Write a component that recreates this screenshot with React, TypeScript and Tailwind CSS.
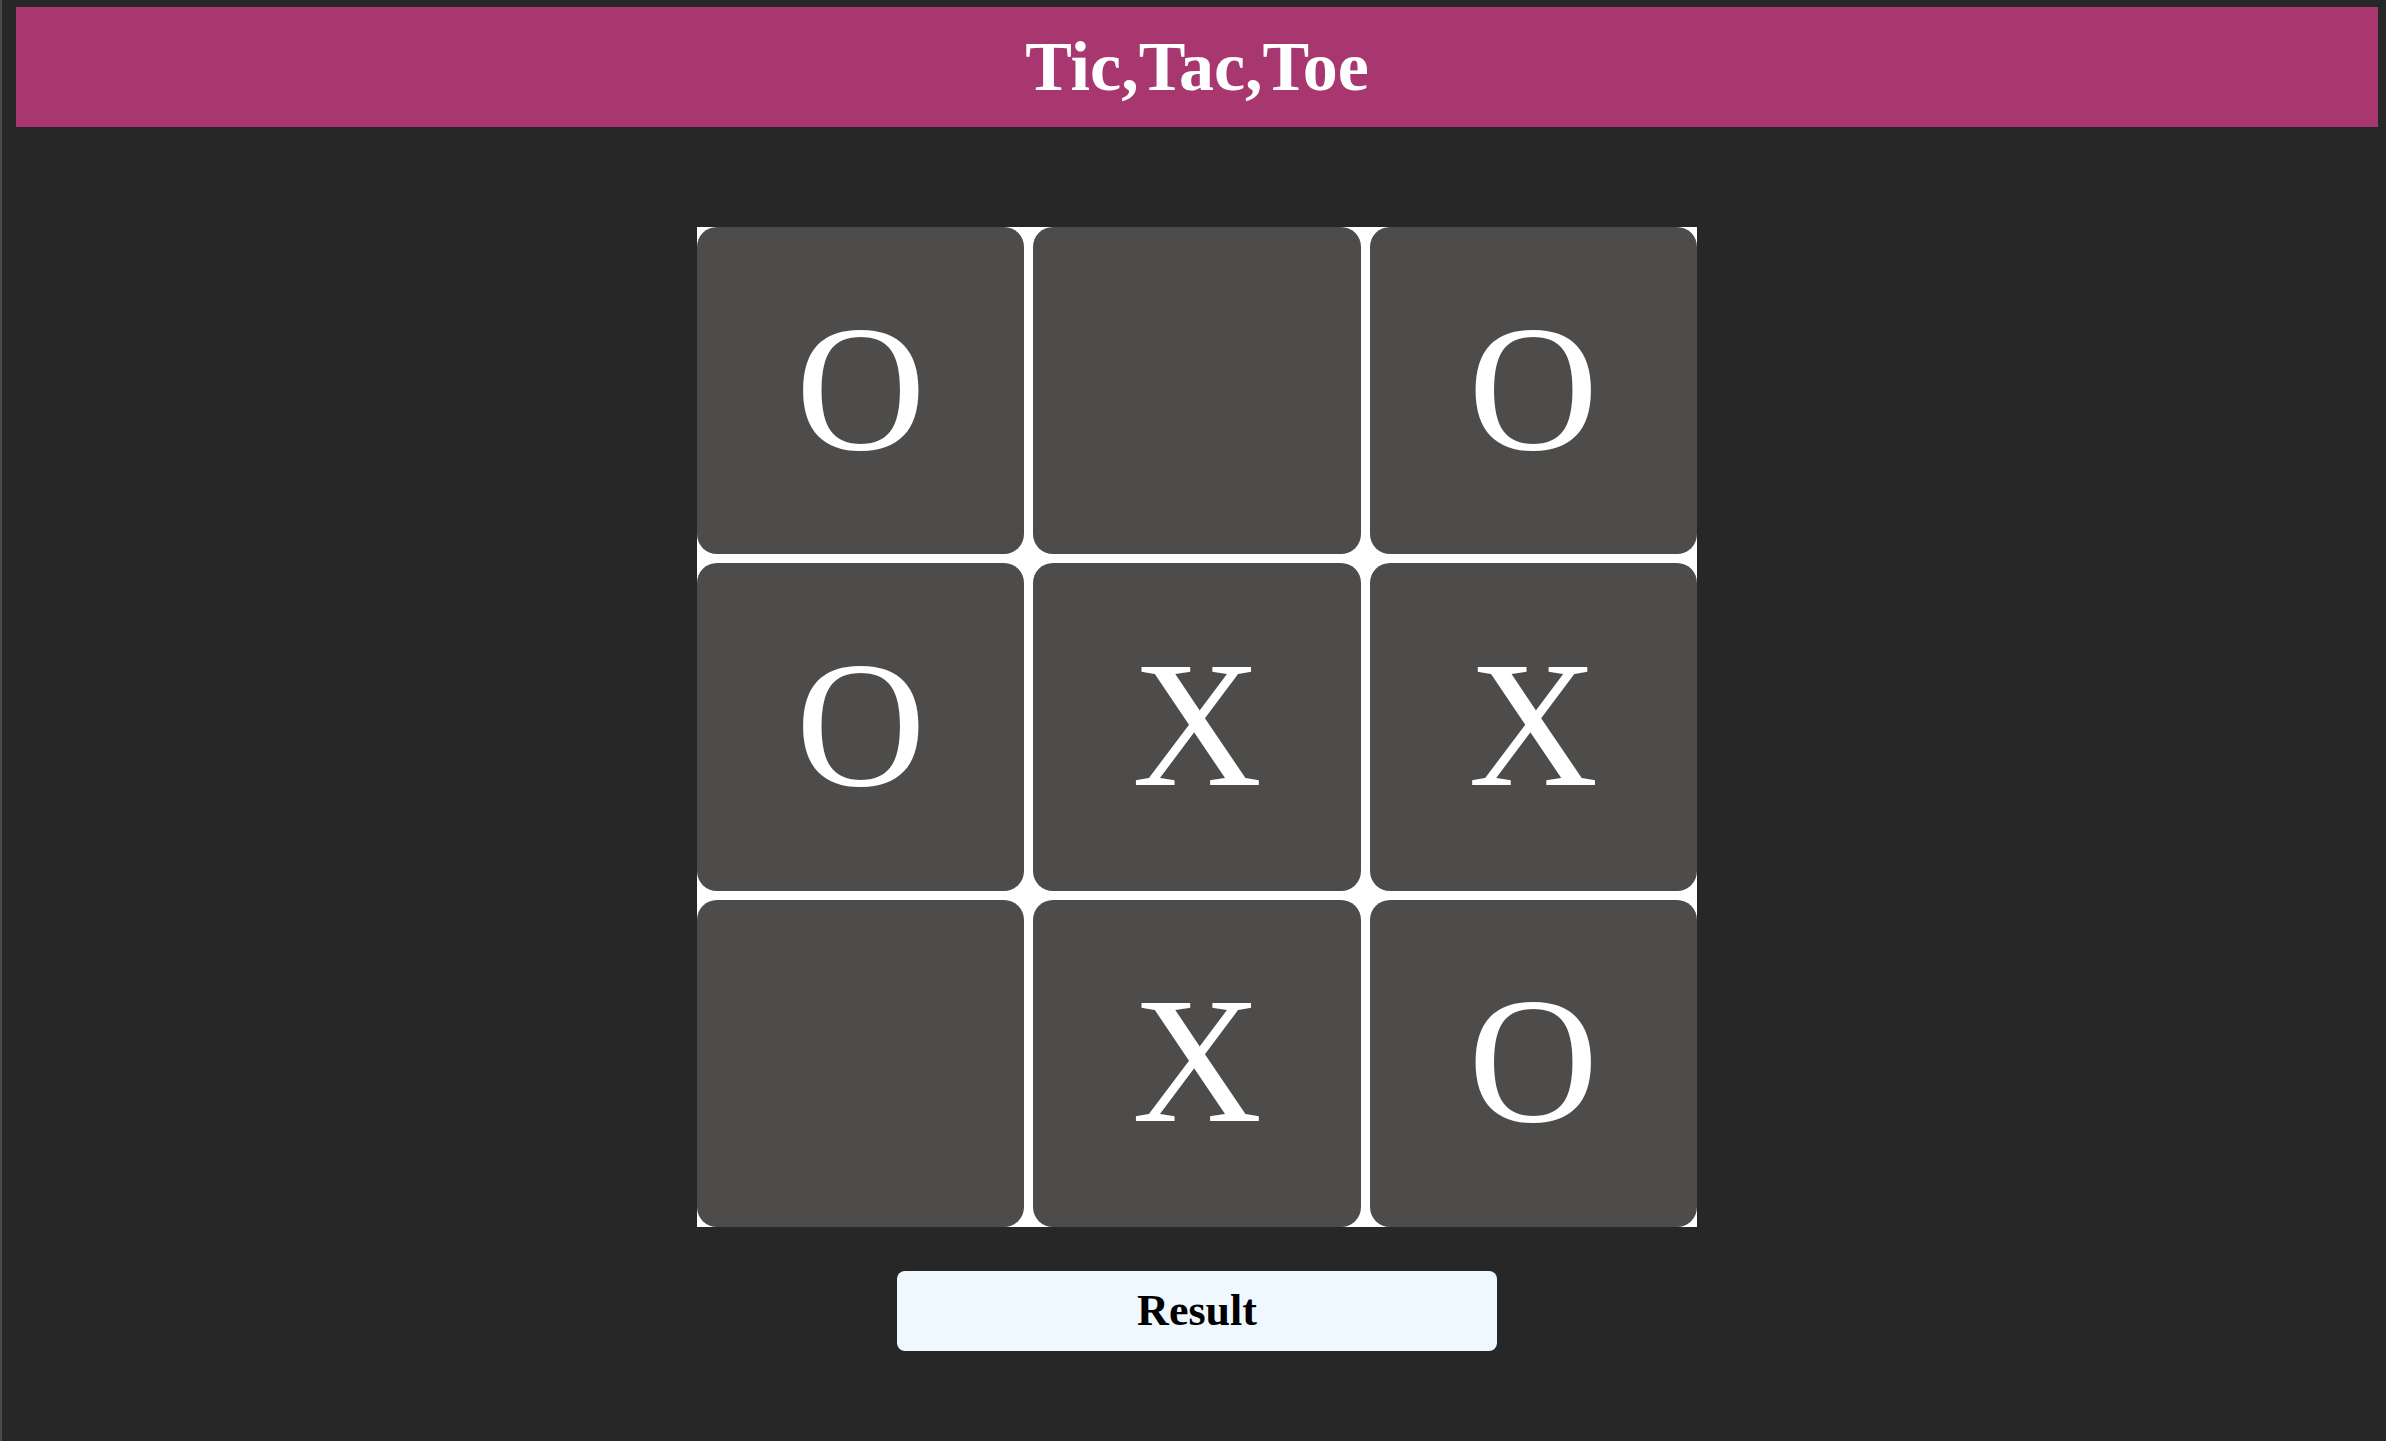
import React from "react";

const board: string[] = ["O", "", "O", "O", "X", "X", "", "X", "O"];

const serif = { fontFamily: '"Liberation Serif", "Times New Roman", serif' };

const App: React.FC = () => {
  return (
    <div
      className="min-h-screen w-full bg-[#282728] border-l-2 border-[#4a4a4a]"
      style={serif}
    >
      <div className="ml-[14px] mr-[8px] pt-[7px] flex flex-col items-center">
        <header className="w-full h-[120px] bg-[#a83770] flex items-center justify-center">
          <h1 className="text-white font-bold text-[70px] leading-none">
            Tic,Tac,Toe
          </h1>
        </header>

        <div className="mt-[100px] w-[1000px] h-[1000px] bg-white grid grid-cols-3 grid-rows-3 gap-[9px]">
          {board.map((v, i) => (
            <div
              key={i}
              className="rounded-[20px] bg-[#4d4c4b] flex items-center justify-center pb-[4px] text-white text-[180px] leading-none"
            >
              {v}
            </div>
          ))}
        </div>

        <button className="mt-[44px] w-[600px] h-[80px] rounded-[8px] bg-[#f0f8ff] text-black font-bold text-[44px] leading-none">
          Result
        </button>
      </div>
    </div>
  );
};

export default App;
